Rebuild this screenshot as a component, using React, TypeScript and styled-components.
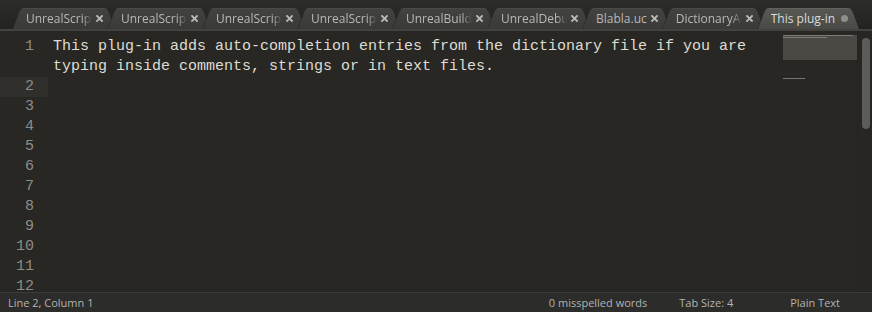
import React from 'react';
import styled, { createGlobalStyle } from 'styled-components';

const Global = createGlobalStyle`
  html, body { margin: 0; padding: 0; background: #282723; overflow: hidden; }
  #root { width: 872px; height: 312px; }
`;

const Window = styled.div`
  width: 872px;
  height: 312px;
  display: flex;
  flex-direction: column;
  overflow: hidden;
  background: #282723;
`;

const TabBar = styled.div`
  height: 29px;
  flex: none;
  display: flex;
  align-items: flex-end;
  padding-left: 12px;
  background: linear-gradient(#2c2c2a, #232322);
  border-bottom: 2px solid #42423f;
`;

const Tab = styled.div<{ $active?: boolean }>`
  position: relative;
  height: 21px;
  display: flex;
  align-items: center;
  gap: 4px;
  padding: 0 13px 0 14px;
  margin-right: -9px;
  z-index: ${(p) => (p.$active ? 2 : 1)};
  font-family: 'Open Sans', 'Noto Sans', sans-serif;
  font-size: 12px;
  color: ${(p) => (p.$active ? '#dcdcda' : '#b8b8b5')};

  &::before,
  &::after {
    content: '';
    position: absolute;
    top: 0;
    bottom: 0;
    width: 60%;
    z-index: -1;
    transform-origin: bottom;
    background: ${(p) =>
      p.$active
        ? 'linear-gradient(#575754, #4a4a47)'
        : 'linear-gradient(#42423f, #3a3a38)'};
    border-top: 1px solid ${(p) => (p.$active ? '#62625f' : '#4a4a47')};
  }
  &::before {
    left: 0;
    border-top-left-radius: 5px;
    border-left: 1px solid #2b2b29;
    transform: skewX(-20deg);
  }
  &::after {
    right: 0;
    border-top-right-radius: 5px;
    border-right: 1px solid #2b2b29;
    transform: skewX(20deg);
  }
`;

const TabLabel = styled.span<{ $fade?: boolean; $auto?: boolean }>`
  display: block;
  width: ${(p) => (p.$auto ? 'auto' : '66px')};
  white-space: nowrap;
  overflow: hidden;
  line-height: 21px;
  ${(p) =>
    p.$fade
      ? `-webkit-mask-image: linear-gradient(to right, #000 56px, transparent 66px);
         mask-image: linear-gradient(to right, #000 56px, transparent 66px);`
      : ''}
`;

const CloseIcon = () => (
  <svg width="7" height="7" viewBox="0 0 7 7" style={{ flex: 'none' }}>
    <path d="M1 1L6 6M6 1L1 6" stroke="#b9b9b6" strokeWidth="1.8" strokeLinecap="square" />
  </svg>
);

const DirtyDot = styled.span`
  width: 7px;
  height: 7px;
  border-radius: 50%;
  background: #8e8e8b;
  flex: none;
`;

const Editor = styled.div`
  flex: 1;
  display: flex;
  min-height: 0;
`;

const Lines = styled.div`
  flex: 1;
  padding-top: 6px;
  overflow: hidden;
  font-family: 'Liberation Mono', 'DejaVu Sans Mono', monospace;
  font-size: 15px;
  line-height: 20px;
`;

const Row = styled.div`
  display: flex;
`;

const Num = styled.div<{ $active?: boolean }>`
  width: 48px;
  flex: none;
  box-sizing: border-box;
  padding-right: 14px;
  text-align: right;
  color: #8d8d88;
  background: ${(p) => (p.$active ? '#302f2b' : 'transparent')};
  align-self: flex-start;
`;

const Code = styled.div`
  flex: 1;
  min-height: 20px;
  padding-left: 5px;
  white-space: pre-wrap;
  color: #dedcd4;
`;

const Minimap = styled.div`
  width: 74px;
  flex: none;
  padding-top: 4px;
  display: flex;
  flex-direction: column;
`;

const MiniViewport = styled.div`
  height: 25px;
  background: #4a4944;
  display: flex;
  flex-direction: column;
  gap: 1px;
`;

const MiniLine = styled.div<{ $w: number; $top?: number }>`
  height: 1px;
  width: ${(p) => p.$w}px;
  margin-top: ${(p) => p.$top ?? 0}px;
  background: #8a8a84;
  opacity: 0.8;
`;

const ScrollTrack = styled.div`
  width: 15px;
  flex: none;
  box-sizing: border-box;
  padding: 7px 0 0 4px;
  background: #272624;
  border-left: 1px solid #232321;
`;

const ScrollThumb = styled.div`
  width: 8px;
  height: 91px;
  border-radius: 4px;
  background: #5c5c59;
`;

const StatusBar = styled.div`
  height: 19px;
  flex: none;
  display: flex;
  align-items: center;
  padding-left: 8px;
  border-top: 1px solid #3b3b39;
  background: #2c2c2a;
  font-family: 'Open Sans', 'Noto Sans', sans-serif;
  font-size: 11px;
  color: #b3b3b0;
`;

const StatusItem = styled.span<{ $left?: number }>`
  margin-left: ${(p) => (p.$left !== undefined ? `${p.$left}px` : '0')};
  white-space: nowrap;
`;

const Spacer = styled.span`
  flex: 1;
`;

const tabs = [
  { label: 'UnrealScript', fade: true },
  { label: 'UnrealScript', fade: true },
  { label: 'UnrealScript', fade: true },
  { label: 'UnrealScript', fade: true },
  { label: 'UnrealBuild', fade: true },
  { label: 'UnrealDebu', fade: true },
  { label: 'Blabla.uc', auto: true },
  { label: 'DictionaryAu', fade: true },
  { label: 'This plug-in', active: true },
];

const lines = [
  'This plug-in adds auto-completion entries from the dictionary file if you are typing inside comments, strings or in text files.',
  '',
  '',
  '',
  '',
  '',
  '',
  '',
  '',
  '',
  '',
  '',
];

export default function App() {
  return (
    <Window>
      <Global />
      <TabBar>
        {tabs.map((t, i) => (
          <Tab key={i} $active={t.active}>
            <TabLabel $fade={t.fade} $auto={t.auto}>
              {t.label}
            </TabLabel>
            {t.active ? <DirtyDot /> : <CloseIcon />}
          </Tab>
        ))}
      </TabBar>
      <Editor>
        <Lines>
          {lines.map((l, i) => (
            <Row key={i}>
              <Num $active={i === 1}>{i + 1}</Num>
              <Code>{l}</Code>
            </Row>
          ))}
        </Lines>
        <Minimap>
          <MiniViewport>
            <MiniLine $w={70} />
            <MiniLine $w={44} />
          </MiniViewport>
          <MiniLine $w={22} $top={18} />
        </Minimap>
        <ScrollTrack>
          <ScrollThumb />
        </ScrollTrack>
      </Editor>
      <StatusBar>
        <StatusItem>Line 2, Column 1</StatusItem>
        <Spacer />
        <StatusItem>0 misspelled words</StatusItem>
        <StatusItem $left={32}>Tab Size: 4</StatusItem>
        <StatusItem $left={57}>Plain Text</StatusItem>
        <StatusItem $left={32} />
      </StatusBar>
    </Window>
  );
}
